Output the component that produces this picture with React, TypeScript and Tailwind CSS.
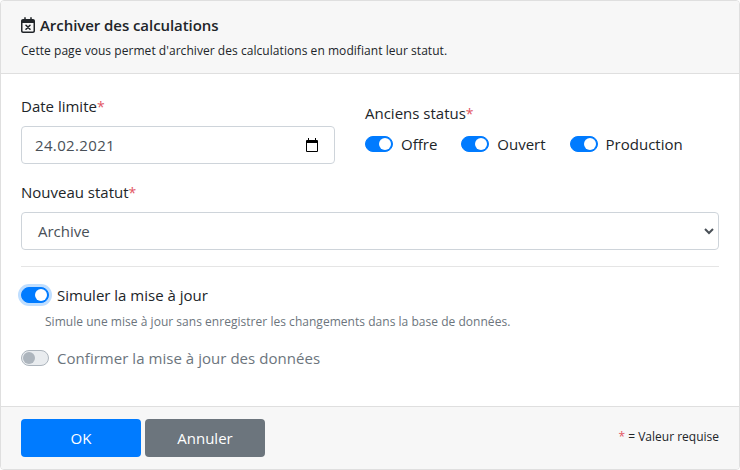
import React from 'react';

function CalendarXmark() {
  return (
    <svg className="h-4 w-3.5" viewBox="0 0 448 512" fill="currentColor">
      <path
        fillRule="evenodd"
        d="M128 0c13.300 0 24 10.700 24 24v40h144V24c0-13.300 10.700-24 24-24s24 10.700 24 24v40h40c35.300 0 64 28.700 64 64v320c0 35.300-28.700 64-64 64H64c-35.300 0-64-28.700-64-64V128c0-35.300 28.700-64 64-64h40V24c0-13.300 10.700-24 24-24zM48 192v256c0 8.800 7.200 16 16 16h320c8.800 0 16-7.200 16-16V192z"
      />
      <path d="M160 264l128 128M288 264L160 392" fill="none" stroke="currentColor" strokeWidth="50" strokeLinecap="round" />
    </svg>
  );
}

function Required() {
  return <span className="text-[14px] tracking-normal text-[#e25563]">*</span>;
}

interface SwitchProps {
  label: string;
  checked?: boolean;
  focused?: boolean;
  disabled?: boolean;
}

function Switch({ label, checked, focused, disabled }: SwitchProps) {
  return (
    <label className="flex h-6 items-center gap-2">
      <span
        className={
          'flex h-4 w-7 shrink-0 items-center rounded-full border px-px ' +
          (checked ? 'justify-end border-[#007bff] bg-[#007bff] ' : 'border-[#adb5bd] bg-[#e9ecef] ') +
          (focused ? 'ring-[3px] ring-[#bfdeff]' : '')
        }
      >
        <span className={'size-3 rounded-full ' + (checked ? 'bg-white' : 'bg-[#adb5bd]')} />
      </span>
      <span className={'whitespace-nowrap' + (disabled ? ' tracking-[0.04px] text-[#6c757d]' : '')}>{label}</span>
    </label>
  );
}

export default function App() {
  return (
    <div className="flex h-[470px] w-[740px] flex-col overflow-hidden rounded border border-[#dfdfdf] bg-white font-['Open_Sans','Noto_Sans',sans-serif] text-[15px] leading-6 text-[#212529]">
      <header className="h-[73px] shrink-0 border-b border-[#dfdfdf] bg-[#f7f7f7] px-5 pt-3">
        <h1 className="flex h-6 items-center gap-[5px] whitespace-nowrap font-semibold tracking-[-0.06px]">
          <CalendarXmark />
          <span>Archiver des calculations</span>
        </h1>
        <p className="mt-[3px] whitespace-nowrap text-[12px] leading-[22px] tracking-[0.05px]">
          Cette page vous permet d'archiver des calculations en modifiant leur statut.
        </p>
      </header>

      <main className="flex-1 px-5 pt-5">
        <div className="flex gap-[30px]">
          <div className="w-[314px]">
            <div className="h-8"><span>Date limite</span><Required /></div>
            <div className="flex h-[38px] items-center justify-between rounded border border-[#ced4da] pr-[15px] pl-[13px] text-[#495057]">
              <span className="tracking-[0.35px]">24.02.2021</span>
              <svg className="h-[15px] w-[14px] text-black" viewBox="0 0 14 15" fill="currentColor">
                <path fillRule="evenodd" d="M3 0h1v2h6V0h1v2h1q1 0 1 1v10q0 1-1 1H2q-1 0-1-1V3q0-1 1-1h1zM2 5v8h10V5z" />
              </svg>
            </div>
          </div>
          <div className="pt-[7px]">
            <div className="h-[31px]"><span>Anciens status</span><Required /></div>
            <div className="flex gap-6">
              <Switch label="Offre" checked />
              <Switch label="Ouvert" checked />
              <Switch label="Production" checked />
            </div>
          </div>
        </div>

        <div className="mt-4">
          <div className="h-8"><span>Nouveau statut</span><Required /></div>
          <div className="flex h-[38px] items-center justify-between rounded border border-[#ced4da] pr-1 pl-4 text-[#495057]">
            <span>Archive</span>
            <svg className="h-2 w-2.5" viewBox="0 0 10 8" fill="none" stroke="currentColor" strokeWidth="2">
              <path d="M1 2l4 4 4-4" />
            </svg>
          </div>
        </div>

        <hr className="mt-4 border-[#e5e5e5]" />

        <div className="mt-4">
          <Switch label="Simuler la mise à jour" checked focused />
          <p className="mt-[5px] h-5 whitespace-nowrap pl-6 text-[12px] leading-5 tracking-[0.03px] text-[#6c757d]">
            Simule une mise à jour sans enregistrer les changements dans la base de données.
          </p>
          <div className="mt-3.5">
            <Switch label="Confirmer la mise à jour des données" disabled />
          </div>
        </div>
      </main>

      <footer className="flex h-[63px] shrink-0 items-center justify-between border-t border-[#dfdfdf] bg-[#f7f7f7] px-5">
        <div className="flex gap-1 text-white">
          <button className="h-[38px] w-[120px] rounded bg-[#007bff]">OK</button>
          <button className="h-[38px] w-[120px] rounded bg-[#6c757d]">Annuler</button>
        </div>
        <div className="whitespace-nowrap pb-0.5 text-[12px]">
          <span className="text-[#e25563]">*</span> = Valeur requise
        </div>
      </footer>
    </div>
  );
}
